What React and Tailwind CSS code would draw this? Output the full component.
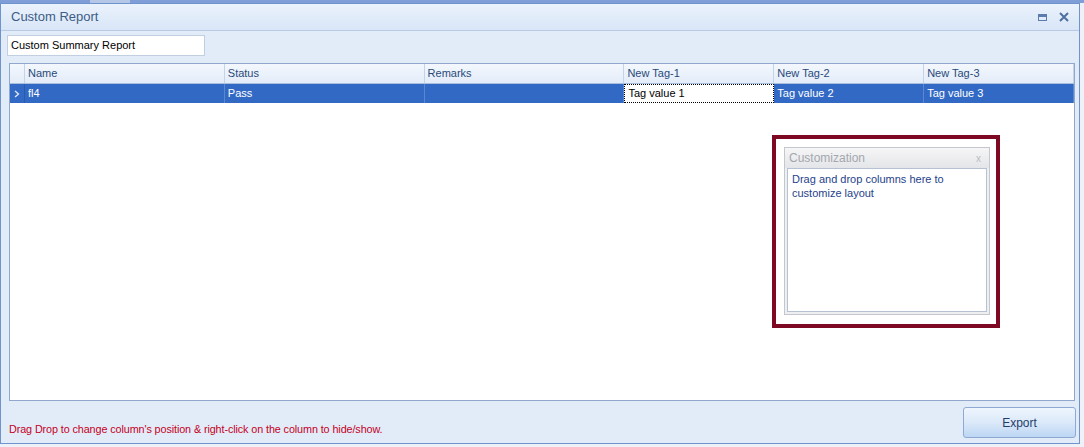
import React from 'react';

const columns = [
  { name: 'Name', w: 'w-[200px]', value: 'fl4' },
  { name: 'Status', w: 'w-[200px]', value: 'Pass' },
  { name: 'Remarks', w: 'w-[200px]', value: '' },
  { name: 'New Tag-1', w: 'w-[150px]', value: 'Tag value 1', focused: true },
  { name: 'New Tag-2', w: 'w-[150px]', value: 'Tag value 2' },
  { name: 'New Tag-3', w: 'w-[150px]', value: 'Tag value 3' },
];

function CustomizationWindow() {
  return (
    <div className="absolute left-[762px] top-[71px] w-[228px] h-[193px] border-[4px] border-[#7d0a22] bg-white">
      <div className="absolute left-[8px] top-[8px] w-[206px] h-[168px] border border-[#c4c8ce] bg-[#eeeff1] flex flex-col">
        <div className="h-[20px] flex items-center justify-between px-[4px] bg-gradient-to-b from-[#f6f6f7] to-[#e4e5e8]">
          <span className="text-[12px] text-[#a3a7ad]">Customization</span>
          <span className="text-[10px] text-[#b8bcc2] pr-[4px]">x</span>
        </div>
        <div className="flex-1 mx-[2px] mb-[2px] border border-[#b6c2d3] bg-white px-[4px] pt-[3px] text-[11px] leading-[14px] text-[#1f3f8c]">
          Drag and drop columns here to customize layout
        </div>
      </div>
    </div>
  );
}

export default function App() {
  return (
    <div className="w-[1084px] h-[447px] bg-[#eef2f8] overflow-hidden relative" style={{ fontFamily: '"Liberation Sans", Arial, sans-serif' }}>
      {/* background window strip */}
      <div className="h-[3px] bg-[#7f9ed8] flex">
        <div className="ml-[90px] w-[40px] h-[3px] bg-[#b5c7e6]" />
      </div>

      <div className="w-[1080px] h-[441px] border border-[#6f93cc] bg-[#e2ecf9] flex flex-col">
        {/* Title bar */}
        <div className="h-[27px] flex items-center justify-between pl-[10px] pr-[10px] bg-gradient-to-b from-[#eaf2fc] to-[#d9e6f7] border-b border-[#b9cbe4]">
          <span className="text-[13px] text-[#3d5c86]">Custom Report</span>
          <div className="flex items-center gap-[12px]">
            <div className="w-[9px] h-[7px] border border-[#5b7cad] border-t-[3px]" />
            <svg width="10" height="10" viewBox="0 0 10 10">
              <path d="M1 1 L9 9 M9 1 L1 9" stroke="#4f6f9f" strokeWidth="2" />
            </svg>
          </div>
        </div>

        {/* Report name */}
        <div className="pl-[6px] pt-[4px]">
          <div className="w-[198px] h-[21px] bg-white border border-[#c1cfe2] flex items-center px-[3px] text-[11px] text-black">
            Custom Summary Report
          </div>
        </div>

        {/* Grid */}
        <div className="ml-[8px] mt-[7px] w-[1066px] h-[338px] border border-[#8fa8cc] bg-white relative">
          <div className="flex h-[20px] bg-gradient-to-b from-[#f4f8fd] to-[#e3ecf9] border-b border-[#a9bfdc]">
            <div className="w-[15px] border-r border-[#c3d3e8]" />
            {columns.map((c) => (
              <div key={c.name} className={`${c.w} border-r border-[#c3d3e8] flex items-center px-[3px] text-[11px] text-[#284a7a]`}>
                {c.name}
              </div>
            ))}
          </div>
          <div className="flex h-[19px] bg-[#3269c4]">
            <div className="w-[15px] flex items-center justify-center border-r border-[#2a5aad]">
              <svg width="6" height="8" viewBox="0 0 6 8">
                <path d="M1 1 L4.5 4 L1 7" stroke="#dfe8f7" strokeWidth="1.4" fill="none" />
              </svg>
            </div>
            {columns.map((c) =>
              c.focused ? (
                <div key={c.name} className={`${c.w} bg-white border border-dotted border-black flex items-center px-[3px] text-[11px] text-black`}>
                  {c.value}
                </div>
              ) : (
                <div key={c.name} className={`${c.w} border-r border-[#5b87d0] flex items-center px-[3px] text-[11px] text-white`}>
                  {c.value}
                </div>
              )
            )}
          </div>
          <CustomizationWindow />
        </div>

        {/* Footer */}
        <div className="flex-1 flex items-end justify-between pl-[8px] pr-[3px] pb-[5px]">
          <span className="text-[10.8px] tracking-[-0.1px] text-[#c4001c] pb-[1px]">
            Drag Drop to change column's position &amp;  right-click on the column to hide/show.
          </span>
          <button className="w-[113px] h-[31px] rounded-[3px] border border-[#8eaad2] bg-gradient-to-b from-[#eef5fd] via-[#dbe9f9] to-[#bcd6f3] text-[12px] text-[#1f3d6a]">
            Export
          </button>
        </div>
      </div>
    </div>
  );
}
